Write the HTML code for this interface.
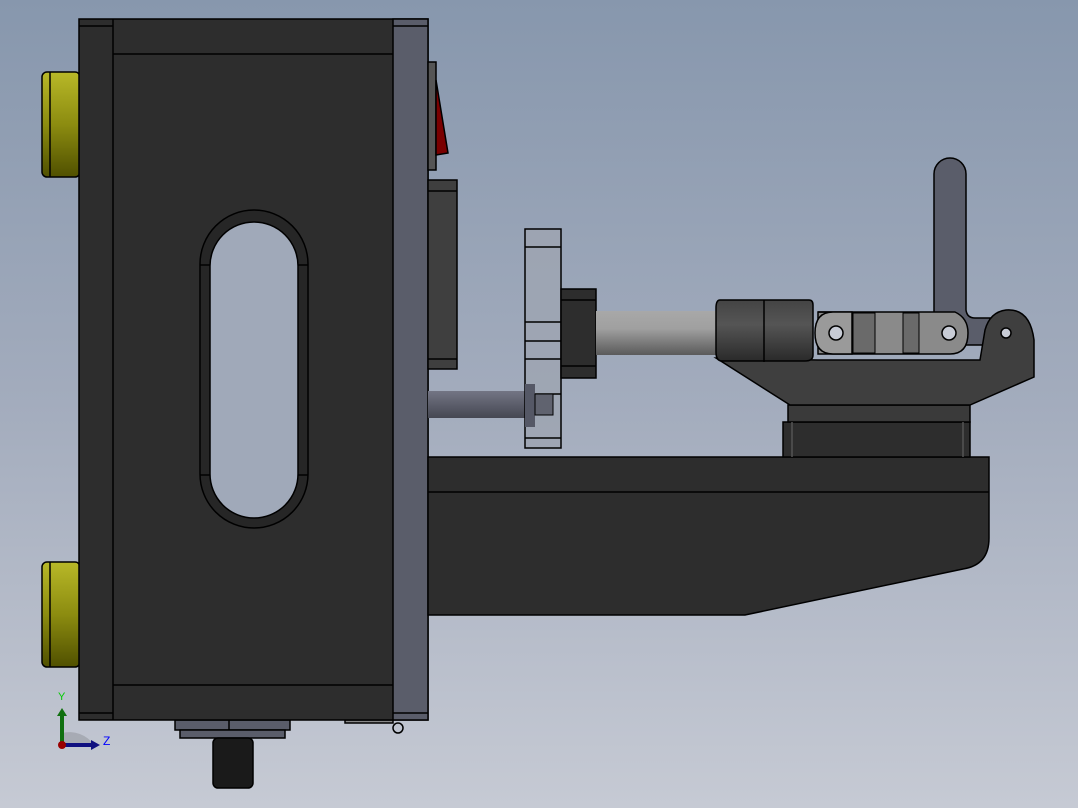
<!DOCTYPE html>
<html><head><meta charset="utf-8"><style>html,body{margin:0;padding:0;width:1078px;height:808px;overflow:hidden}svg{display:block}</style></head><body>
<svg width="1078" height="808" viewBox="0 0 1078 808" xmlns="http://www.w3.org/2000/svg">
<defs>
<linearGradient id="bg" x1="0" y1="0" x2="0" y2="1"><stop offset="0" stop-color="#8797ad"/><stop offset="0.5" stop-color="#a3acbd"/><stop offset="1" stop-color="#c6cad4"/></linearGradient>
<linearGradient id="yel" x1="0" y1="0" x2="0" y2="1"><stop offset="0" stop-color="#b8b828"/><stop offset="0.5" stop-color="#8c8c10"/><stop offset="1" stop-color="#505000"/></linearGradient>
<linearGradient id="rod" x1="0" y1="0" x2="0" y2="1"><stop offset="0" stop-color="#a8a8a8"/><stop offset="0.4" stop-color="#a0a0a0"/><stop offset="1" stop-color="#5a5a5a"/></linearGradient>
<linearGradient id="rod2" x1="0" y1="0" x2="0" y2="1"><stop offset="0" stop-color="#737584"/><stop offset="1" stop-color="#454752"/></linearGradient>
<linearGradient id="grip" x1="0" y1="0" x2="0" y2="1"><stop offset="0" stop-color="#444"/><stop offset="0.4" stop-color="#555"/><stop offset="1" stop-color="#2a2a2a"/></linearGradient>
</defs>
<rect width="1078" height="808" fill="url(#bg)"/>
<g stroke="#000" stroke-width="1.5">
<rect x="42" y="72" width="38" height="105" rx="5" fill="url(#yel)"/>
<line x1="50" y1="72" x2="50" y2="177"/>
<rect x="42" y="562" width="38" height="105" rx="5" fill="url(#yel)"/>
<line x1="50" y1="562" x2="50" y2="667"/>
<rect x="175" y="720" width="115" height="10" fill="#5a5d6a"/>
<rect x="180" y="730" width="105" height="8" fill="#5a5d6a"/>
<line x1="229" y1="720" x2="229" y2="730"/>
<rect x="213" y="738" width="40" height="50" rx="5" fill="#1a1a1a"/>
<rect x="345" y="720" width="48" height="3" fill="#888"/>
<circle cx="398" cy="728" r="5" fill="none"/>
<rect x="79" y="19" width="349" height="701" fill="#2d2d2d"/>
<rect x="393" y="19" width="35" height="701" fill="#5a5d6a"/>
<line x1="113" y1="19" x2="113" y2="720"/>
<line x1="113" y1="54" x2="393" y2="54"/>
<line x1="113" y1="685" x2="393" y2="685"/>
<line x1="79" y1="26" x2="113" y2="26"/><line x1="393" y1="26" x2="428" y2="26"/>
<line x1="79" y1="713" x2="113" y2="713"/><line x1="393" y1="713" x2="428" y2="713"/>
<rect x="200" y="210" width="108" height="318" rx="54" fill="#262626"/>
<rect x="210" y="222" width="88" height="296" rx="44" fill="#a0a9b9"/>
<line x1="200" y1="265" x2="210" y2="265"/><line x1="298" y1="265" x2="308" y2="265"/>
<line x1="200" y1="475" x2="210" y2="475"/><line x1="298" y1="475" x2="308" y2="475"/>
<rect x="428" y="62" width="8" height="108" fill="#555"/>
<polygon points="436,80 448,153 436,155" fill="#7a0000"/>
<rect x="428" y="180" width="29" height="189" fill="#3f3f3f"/>
<line x1="428" y1="191" x2="457" y2="191"/><line x1="428" y1="359" x2="457" y2="359"/>
<path d="M428 457 H989 V538 Q989 565 963 569 L745 615 H428 Z" fill="#2d2d2d"/>
<line x1="428" y1="492" x2="989" y2="492"/>
<rect x="428" y="391" width="100" height="27" fill="url(#rod2)" stroke="none"/>
<rect x="525" y="229" width="36" height="219" fill="#9ea4b2" fill-opacity="0.85"/>
<line x1="525" y1="247" x2="561" y2="247"/><line x1="525" y1="322" x2="561" y2="322"/>
<line x1="525" y1="341" x2="561" y2="341"/><line x1="525" y1="359" x2="561" y2="359"/>
<line x1="525" y1="394" x2="561" y2="394"/><line x1="525" y1="438" x2="561" y2="438"/>
<rect x="525" y="384" width="10" height="43" fill="#555866" stroke="none"/>
<rect x="535" y="394" width="18" height="21" fill="#60636f" stroke-width="1"/>
<rect x="561" y="289" width="35" height="89" fill="#2d2d2d"/>
<line x1="561" y1="300" x2="596" y2="300"/><line x1="561" y1="366" x2="596" y2="366"/>
<rect x="596" y="311" width="122" height="44" fill="url(#rod)" stroke="none"/>
<rect x="783" y="422" width="187" height="35" fill="#2d2d2d"/>
<rect x="788" y="405" width="182" height="17" fill="#3a3a3a"/>
<line x1="792" y1="422" x2="792" y2="457" stroke="#555"/><line x1="963" y1="422" x2="963" y2="457" stroke="#555"/>
<!-- handle -->
<path d="M934 345 V174 A16 16 0 0 1 966 174 V310 Q967 318 975 318 H990 L985 345 Z" fill="#5a5d6a"/>
<!-- clamp body -->
<path d="M716 358 L790 405 H970 L1034 377 V340 Q1030 308 1006 310 Q990 312 985 330 L980 360 L818 360 L716 358 Z" fill="#3f3f3f"/>
<circle cx="1006" cy="333" r="5" fill="#c8ccd6"/>
<path d="M818 312 H955 Q968 318 968 333 Q968 354 950 354 H818 Z" fill="#8a8a8a"/>
<rect x="853" y="313" width="22" height="40" fill="#6a6a6a" stroke-width="1"/>
<rect x="903" y="313" width="16" height="40" fill="#6a6a6a" stroke-width="1"/>
<path d="M818 312 H852 V354 H833 Q815 354 815 333 Q815 312 833 312 Z" fill="#9a9a9a"/>
<circle cx="836" cy="333" r="7" fill="#c8ccd6"/>
<circle cx="949" cy="333" r="7" fill="#c8ccd6"/>
<path d="M720 300 H809 Q813 300 813 305 V355 Q813 361 805 361 H722 Q716 361 716 352 V308 Q716 300 720 300 Z" fill="url(#grip)"/>
<line x1="764" y1="300" x2="764" y2="362"/>
</g>
<path d="M62 733 A30 30 0 0 1 94 745 L62 745 Z" fill="#9ca0a8" opacity="0.7"/>
<line x1="62" y1="745" x2="62" y2="714" stroke="#107010" stroke-width="4"/>
<polygon points="57,716 62,708 67,716" fill="#107010"/>
<line x1="62" y1="745" x2="93" y2="745" stroke="#101080" stroke-width="4"/>
<polygon points="91,740 100,745 91,750" fill="#101080"/>
<circle cx="62" cy="745" r="4" fill="#900"/>
<text x="58" y="700" font-family="Liberation Sans, sans-serif" font-size="11" fill="#0c0">Y</text>
<text x="103" y="745" font-family="Liberation Sans, sans-serif" font-size="12" fill="#00f">Z</text>
</svg>
</body></html>
